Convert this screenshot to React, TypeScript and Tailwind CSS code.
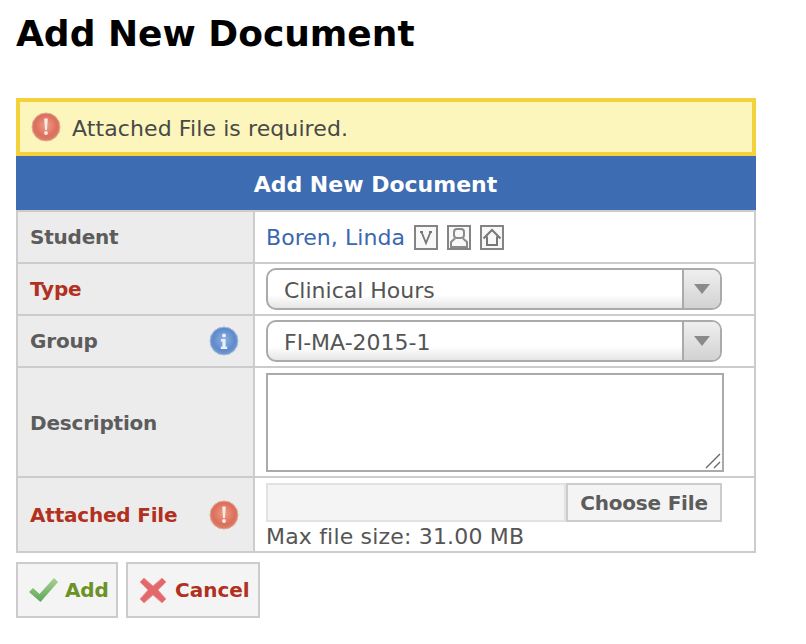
import React from "react";

const FONT = "font-['DejaVu_Sans','Liberation_Sans',sans-serif]";

const AlertIcon = ({ id }: { id: string }) => (
  <svg width="30" height="30" viewBox="0 0 30 30" className="shrink-0 blur-[0.4px]">
    <defs>
      <radialGradient id={id} cx="50%" cy="45%" r="52%">
        <stop offset="0%" stopColor="#ee9c8a" />
        <stop offset="75%" stopColor="#db6f5a" />
        <stop offset="100%" stopColor="#d8806c" />
      </radialGradient>
    </defs>
    <circle cx="15" cy="15" r="14" fill={`url(#${id})`} stroke="#e3a797" strokeWidth="1" />
    <path d="M13.2 6.5h3.6l-.8 11.5h-2z" fill="#fbe9e4" />
    <circle cx="15" cy="21" r="1.9" fill="#fbe9e4" />
  </svg>
);

const InfoIcon = () => (
  <svg width="30" height="30" viewBox="0 0 30 30" className="shrink-0 blur-[0.4px]">
    <defs>
      <radialGradient id="info-bg" cx="50%" cy="45%" r="52%">
        <stop offset="0%" stopColor="#8fb0de" />
        <stop offset="75%" stopColor="#5f8bcb" />
        <stop offset="100%" stopColor="#7497cd" />
      </radialGradient>
    </defs>
    <circle cx="15" cy="15" r="14" fill="url(#info-bg)" stroke="#a3bce0" strokeWidth="1" />
    <circle cx="15" cy="9.5" r="2" fill="#e8eff8" />
    <path d="M12 13h4.6v7.5h1.6V23h-6.4v-2.5h1.6v-5H12z" fill="#e8eff8" />
  </svg>
);

const SmallIcon = ({ children }: { children: React.ReactNode }) => (
  <span className="flex h-[25px] w-6 items-center justify-center border-2 border-[#848484] bg-[#f8f8f8]">
    <svg width="20" height="21" viewBox="0 0 20 21" fill="none" stroke="#8a8a8a" strokeWidth="2" className="blur-[0.3px]">
      {children}
    </svg>
  </span>
);

const Label = ({ text, red }: { text: string; red?: boolean }) => (
  <span className={`text-[20px] font-bold tracking-[-0.2px] ${red ? "text-[#b23020]" : "text-[#5c5c5c]"}`}>{text}</span>
);

const FakeSelect = ({ value }: { value: string }) => (
  <div className="flex h-[42px] w-[456px] overflow-hidden rounded-[10px] border-2 border-[#aaa] bg-gradient-to-b from-white from-65% to-[#e6e6e6]">
    <span className="flex-1 pl-4 pt-px text-[22px] leading-[40px] text-[#555]">{value}</span>
    <span className="flex w-[38px] items-center justify-center border-l-2 border-[#aaa] bg-gradient-to-b from-[#efefef] to-[#d2d2d2]">
      <span className="h-0 w-0 border-x-[8px] border-t-[10px] border-x-transparent border-t-[#8a8a8a]" />
    </span>
  </div>
);

export default function App() {
  return (
    <div className={`${FONT} min-h-[644px] bg-white px-4 pt-[12px] text-[#555]`}>
      <h1 className="text-[36px] leading-[43px] font-bold text-black">Add New Document</h1>

      <div className="mt-[43px] w-[740px]">
        <div className="flex h-[58px] items-center gap-[11px] border-4 border-[#f3d23c] bg-[#fcf6bc] pl-[11px]">
          <AlertIcon id="alert-top" />
          <span className="pt-[2px] text-[22px] tracking-[0.1px] text-[#484848]">Attached File is required.</span>
        </div>
        <div className="flex h-[54px] items-center justify-center bg-[#3e6cb3] pr-[21px] pt-[2px] text-[22px] font-bold text-white">
          Add New Document
        </div>

        <div className="grid grid-cols-[235px_1fr] grid-rows-[52px_52px_52px_110px_75px] border-x-2 border-b-2 border-[#ccc] [&>div]:border-t-2 [&>div]:border-[#ccc]">
          <div className="flex items-center bg-[#ececec] px-3">
            <Label text="Student" />
          </div>
          <div className="flex items-center border-l-2 pl-[11px]">
            <span className="mr-[9px] pt-px text-[22px] tracking-[0.05px] text-[#3a67b0]">Boren, Linda</span>
            <span className="flex gap-[9px]">
              <SmallIcon>
                <path d="M4 5h3M13 5h3M5.5 5l4.5 11 4.5-11" strokeWidth="1.8" stroke="#777" />
              </SmallIcon>
              <SmallIcon>
                <rect x="5" y="2" width="10" height="9" rx="3" />
                <path d="M6 11.5L2 15v5h16v-5l-4-3.5" />
              </SmallIcon>
              <SmallIcon>
                <path d="M1.5 11.5L10 3l8.5 8.5M5 9.5V18h10V9.5" stroke="#777" />
              </SmallIcon>
            </span>
          </div>

          <div className="flex items-center bg-[#ececec] px-3">
            <Label text="Type" red />
          </div>
          <div className="flex items-center border-l-2 pl-[11px]">
            <FakeSelect value="Clinical Hours" />
          </div>

          <div className="flex items-center justify-between bg-[#ececec] pl-3 pr-[14px]">
            <Label text="Group" />
            <InfoIcon />
          </div>
          <div className="flex items-center border-l-2 pl-[11px]">
            <FakeSelect value="FI-MA-2015-1" />
          </div>

          <div className="flex items-center bg-[#ececec] px-3 pt-[2px]">
            <Label text="Description" />
          </div>
          <div className="flex items-center border-l-2 pl-[11px]">
            <div className="relative h-[99px] w-[458px]">
              <textarea className="block h-full w-full resize-none border-2 border-[#aaa] bg-white" />
              <svg width="16" height="16" viewBox="0 0 16 16" className="absolute bottom-[3px] right-[3px]" stroke="#666" strokeWidth="1.4">
                <path d="M1 15L15 1M9 15l6-6" />
              </svg>
            </div>
          </div>

          <div className="flex items-center justify-between bg-[#ececec] pl-3 pr-[14px]">
            <Label text="Attached File" red />
            <AlertIcon id="alert-row" />
          </div>
          <div className="flex flex-col border-l-2 pl-[11px] pt-[5px]">
            <div className="flex h-[39px] w-[456px]">
              <div className="w-[300px] border-2 border-[#e2e2e2] bg-[#f4f4f4]" />
              <div className="flex flex-1 items-center justify-center border-2 border-[#ccc] bg-[#f4f4f4] text-[20px] font-bold tracking-[-0.2px] text-[#5c5c5c]">
                Choose File
              </div>
            </div>
            <span className="mt-[1px] text-[22px] leading-[27px] tracking-[0.18px] text-[#555]">Max file size: 31.00 MB</span>
          </div>
        </div>

        <div className="mt-[9px] flex gap-2">
          <button className="flex h-[56px] w-[102px] items-center gap-[6px] border-2 border-[#ccc] bg-[#f4f4f4] pl-[9px] text-[20px] font-bold tracking-[-0.2px] text-[#6b9226]">
            <svg width="32" height="28" viewBox="0 0 32 28" className="blur-[0.3px]">
              <defs>
                <linearGradient id="check-bg" x1="0" y1="0" x2="0" y2="1">
                  <stop offset="0%" stopColor="#a5d28f" />
                  <stop offset="100%" stopColor="#5fa55a" />
                </linearGradient>
              </defs>
              <path d="M2 16l4-4 6.5 6L27 2l4 4-17.5 20z" fill="url(#check-bg)" strokeLinejoin="round" />
            </svg>
            Add
          </button>
          <button className="flex h-[56px] w-[134px] items-center gap-[8px] border-2 border-[#ccc] bg-[#f4f4f4] pl-[11px] text-[20px] font-bold text-[#b23020]">
            <svg width="28" height="28" viewBox="0 0 28 28" className="blur-[0.3px]">
              <path d="M5 2l9 8 9-8 4 4-8 8 8 9-4 4-9-8-9 8-4-4 8-9-8-8z" fill="#e2686c" stroke="#eb9a9c" strokeWidth="1" strokeLinejoin="round" />
            </svg>
            Cancel
          </button>
        </div>
      </div>
    </div>
  );
}
